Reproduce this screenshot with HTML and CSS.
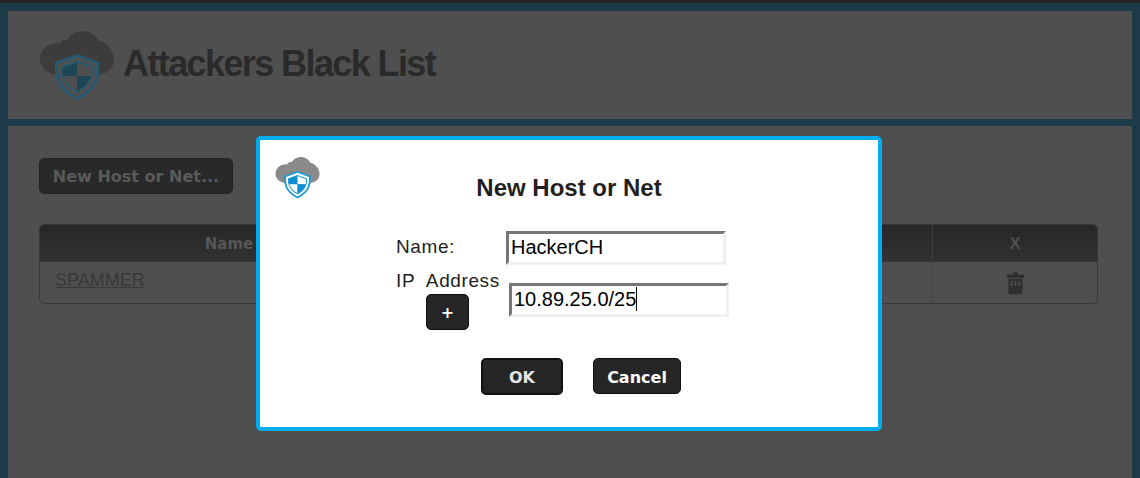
FILE: index.html
```html
<!DOCTYPE html>
<html lang="en">
<head>
<meta charset="utf-8">
<title>Attackers Black List</title>
<link rel="stylesheet" href="styles.css">
</head>
<body>
<svg class="defs" width="0" height="0" aria-hidden="true">
  <symbol id="cloud" viewBox="0 0 74 69">
    <path d="M13 43C5 41 0 35 0 28C0 20 6 14 13 13C16 12 18 12 20 12C22 9 24 8 27 9C30 4 36 0 43 0C50 0 56 4 59 10C61 10 64 11 66 13C71 17 74 22 74 29C74 36 69 42 61 43L58 44H16Z"/>
  </symbol>
  <symbol id="shield" viewBox="0 0 44 46">
    <path class="sh-outer" d="M22 0L44 8C44.500 14 44 20 43 24C40 34 32 41 22 46C12 41 4 34 1 24C0 20 -.5 14 0 8Z"/>
    <path class="sh-gap" d="M22 3L41.200 10C41.500 14 41 19 40 23C38 32 30 38.500 22 42.800C14 38.500 6 32 4 23C3 19 2.500 14 2.800 10Z"/>
    <path class="sh-ring" d="M22 6.500L38 12.500C38 16 38 19 37 22.500C35 29.500 28.500 35.500 22 39.300C15.500 35.500 9 29.500 7 22.500C6 19 6 16 6 12.500Z"/>
    <path class="sh-a" d="M22 8.500V22H8.300C7.700 19 7.700 16 7.700 13.800Z"/>
    <path class="sh-b" d="M22 8.500V22H35.700C36.300 19 36.300 16 36.300 13.800Z"/>
    <path class="sh-b" d="M8.300 22H22V37.200C16 33.500 10 28.500 8.300 22Z"/>
    <path class="sh-a" d="M35.700 22H22V37.200C28 33.500 34 28.500 35.700 22Z"/>
  </symbol>
</svg>

<div class="page">
  <header class="panel head">
    <div class="logo logo-large">
      <svg class="cloud"><use href="#cloud"/></svg>
      <svg class="shield"><use href="#shield"/></svg>
    </div>
    <h1>Attackers Black List</h1>
  </header>
  <main class="panel content">
    <button class="btn-new" type="button">New Host or Net...</button>
    <div class="table">
      <div class="row row-head">
        <div class="cell c-name">Name</div>
        <div class="cell c-mid"></div>
        <div class="cell c-x">X</div>
      </div>
      <div class="row row-body">
        <div class="cell c-name"><a href="#">SPAMMER</a></div>
        <div class="cell c-mid"></div>
        <div class="cell c-x">
          <svg class="trash" viewBox="0 0 18 24" width="17" height="24">
            <path d="M6.500 3C6.500 1 7.500 0 9 0S11.500 1 11.500 3H17C17.600 3 18 3.600 18 4.200V6.500H0V4.200C0 3.600 .4 3 1 3Z"/>
            <path fill-rule="evenodd" d="M1.500 7.500H16.500V22C16.500 23.200 15.700 24 14.500 24H3.500C2.300 24 1.500 23.200 1.500 22ZM4 10V15H6V10ZM8 10V15H10V10ZM12 10V15H14V10Z"/>
          </svg>
        </div>
      </div>
    </div>
  </main>
</div>

<div class="dialog">
  <div class="logo logo-small">
    <svg class="cloud"><use href="#cloud"/></svg>
    <svg class="shield"><use href="#shield"/></svg>
  </div>
  <h2>New Host or Net</h2>
  <div class="form">
    <div class="label">Name:</div>
    <div class="field">HackerCH</div>
    <div class="label-stack">
      <div class="label">IP&nbsp; Address</div>
      <button class="btn btn-plus" type="button">+</button>
    </div>
    <div class="field field-ip">10.89.25.0/25<span class="caret"></span></div>
  </div>
  <div class="actions">
    <button class="btn btn-ok" type="button">OK</button>
    <button class="btn btn-cancel" type="button">Cancel</button>
  </div>
</div>
</body>
</html>
```
FILE: styles.css
```css
* { box-sizing: border-box; }
html, body { margin: 0; height: 100%; }
body {
  background: #1c3a47;
  border-top: 3px solid #252525;
  font-family: "Liberation Sans", Arial, sans-serif;
  overflow: hidden;
  position: relative;
}
.defs { position: absolute; }
.page { padding: 8px 8px 0; display: flex; flex-direction: column; gap: 7px; height: 100%; }
.panel { background: #4f4f4f; }
.head { height: 108px; display: flex; align-items: center; padding-left: 32px; gap: 9px; flex: none; }
h1 {
  margin: 0;
  font-size: 36px;
  font-weight: 700;
  letter-spacing: -1.6px;
  color: #2a2a2a;
  position: relative;
  top: -1px;
}
.logo { position: relative; flex: none; }
.logo-large {
  width: 74px; height: 69px; color: #3c3c3c; margin-top: 1px;
  --ring: #265a72; --gap: #4f4f4f; --qa: #1c4556; --qb: #4f4f4f;
}
.logo-small {
  width: 45px; height: 41px; color: #8a8a8a;
  --ring: #1a9ad6; --gap: #fff; --qa: #0f8fd0; --qb: #fff;
}
.cloud { display: block; width: 100%; height: 100%; fill: currentColor; }
.shield { position: absolute; left: 20%; top: 33%; width: 60%; height: 67%; overflow: visible; }
.sh-outer, .sh-ring { fill: var(--ring); }
.sh-gap { fill: var(--gap); }
.sh-a { fill: var(--qa); }
.sh-b { fill: var(--qb); }

.content { flex: 1; padding: 32px 34px 0 31px; display: flex; flex-direction: column; align-items: flex-start; }
.btn-new {
  width: 194px; height: 36px;
  background: #292929;
  border: 1px solid #242424;
  border-radius: 5px;
  color: #5a5a5a;
  font: 700 16px "DejaVu Sans", Verdana, sans-serif;
  padding: 0;
}
.table {
  margin-top: 30px;
  width: 1059px;
  height: 80px;
  border: 1px solid #383838;
  border-radius: 5px;
  overflow: hidden;
}
.row { display: flex; }
.row-head {
  height: 37px;
  background: linear-gradient(#262626, #323232);
  color: #565656;
  font: 700 15px "DejaVu Sans", Verdana, sans-serif;
}
.row-body { height: 41px; color: #383838; font-size: 18px; }
.cell { display: flex; align-items: center; }
.c-name { width: 378px; justify-content: center; }
.row-body .c-name { justify-content: flex-start; padding-left: 15px; padding-bottom: 4px; }
.c-name a { color: #383838; }
.c-mid { flex: 1; }
.c-x { width: 165px; justify-content: center; border-left: 1px solid #444; }
.row-head .c-x { border-left-color: #3f3f3f; font: 700 16px "Liberation Sans", Arial, sans-serif; color: #505050; }
.trash { fill: #2f2f2f; display: block; margin-left: 1px; }

.dialog {
  position: absolute;
  left: 256px; top: 133px;
  width: 626px; height: 295px;
  background: #fff;
  border: 4px solid #00aeef;
  border-radius: 5px;
  color: #231f20;
  padding: 17px 15px 0;
}
.logo-small { position: absolute; left: 15px; top: 17px; }
h2 { margin: 16px 0 0; height: 30px; text-align: center; font-size: 24px; font-weight: 700; line-height: 30px; }
.form {
  margin: 0 0 0 121px;
  padding-top: 28px;
  display: grid;
  grid-template-columns: 110px 220px;
  row-gap: 18px;
  font-size: 19px;
}
.label { line-height: 22px; letter-spacing: .6px; }
.form > .label { padding-top: 5px; }
.label-stack { display: flex; flex-direction: column; align-items: center; width: 103px; gap: 2px; margin-top: -13px; }
.label-stack .label { white-space: nowrap; align-self: flex-start; }
.field {
  height: 34px;
  width: 220px;
  border: 3px solid;
  border-color: #767676 #f0f0f0 #f0f0f0 #767676;
  padding-left: 2px;
  font-size: 20px;
  line-height: 27px;
  color: #000;
}
.field-ip { margin-left: 3px; }
.caret { display: inline-block; width: 1px; height: 24px; background: #000; vertical-align: -5px; }
.btn {
  background: #262626;
  border: 1px solid #111;
  border-radius: 5px;
  color: #fff;
  font: 700 16px "DejaVu Sans", Verdana, sans-serif;
  padding: 0;
}
.btn-plus { width: 43px; height: 36px; }
.actions { display: flex; justify-content: center; align-items: flex-start; gap: 30px; margin-top: 28px; padding-left: 24px; }
.btn-ok { width: 82px; height: 37px; border-width: 2px; color: #e4e4e4; padding-top: 2px; }
.btn-cancel { width: 88px; height: 36px; padding-top: 2px; }
```
